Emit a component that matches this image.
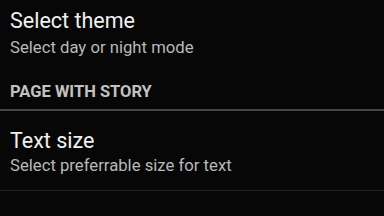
import React from 'react';

const font = { fontFamily: 'Roboto, "Noto Sans", sans-serif' };

export default function App() {
  return (
    <div className="w-[384px] h-[216px] bg-[#070707] overflow-hidden" style={font}>
      {/* Select theme */}
      <div className="pl-[10px] pt-[7px]">
        <div className="text-[21.5px] leading-[28px] text-[#f0f0f0]">Select theme</div>
        <div className="mt-[2px] text-[16.7px] leading-[22px] text-[#b9b9b9]">Select day or night mode</div>
      </div>

      {/* category header */}
      <div className="pl-[10px] mt-[22px] text-[16.5px] leading-[22px] font-bold text-[#c2c2c2]">
        PAGE WITH STORY
      </div>
      <div className="mt-[6px] h-[2px] bg-[#464646]" />

      {/* Text size */}
      <div className="pl-[10px] pt-[16px] pb-[13px]">
        <div className="text-[21.5px] leading-[28px] text-[#f0f0f0]">Text size</div>
        <div className="text-[16.7px] leading-[22px] text-[#b9b9b9]">Select preferrable size for text</div>
      </div>
      <div className="h-px bg-[#242424]" />
    </div>
  );
}
